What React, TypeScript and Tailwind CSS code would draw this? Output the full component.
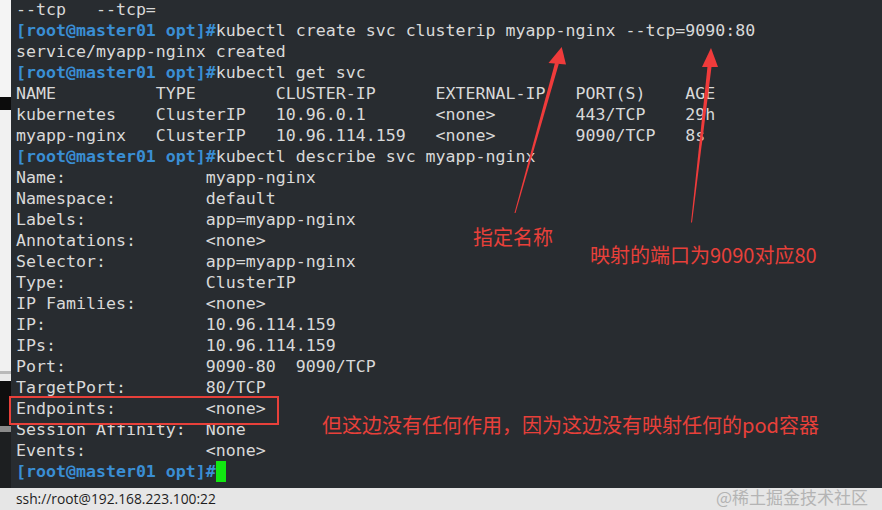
const prompt = "[root@master01 opt]#";

const lines: { p?: boolean; t: string }[] = [
  { t: "--tcp   --tcp=" },
  { p: true, t: "kubectl create svc clusterip myapp-nginx --tcp=9090:80" },
  { t: "service/myapp-nginx created" },
  { p: true, t: "kubectl get svc" },
  { t: "NAME          TYPE        CLUSTER-IP      EXTERNAL-IP   PORT(S)    AGE" },
  { t: "kubernetes    ClusterIP   10.96.0.1       <none>        443/TCP    29h" },
  { t: "myapp-nginx   ClusterIP   10.96.114.159   <none>        9090/TCP   8s" },
  { p: true, t: "kubectl describe svc myapp-nginx" },
  { t: "Name:              myapp-nginx" },
  { t: "Namespace:         default" },
  { t: "Labels:            app=myapp-nginx" },
  { t: "Annotations:       <none>" },
  { t: "Selector:          app=myapp-nginx" },
  { t: "Type:              ClusterIP" },
  { t: "IP Families:       <none>" },
  { t: "IP:                10.96.114.159" },
  { t: "IPs:               10.96.114.159" },
  { t: "Port:              9090-80  9090/TCP" },
  { t: "TargetPort:        80/TCP" },
  { t: "Endpoints:         <none>" },
  { t: "Session Affinity:  None" },
  { t: "Events:            <none>" },
];

const cjk = { fontFamily: '"Noto Sans CJK SC", "Noto Sans", sans-serif' };

export default function App() {
  return (
    <div className="relative w-[882px] h-[510px] overflow-hidden flex flex-col bg-[#282c30]">
      <div className="flex flex-1 min-h-0">
        {/* window behind, left edge */}
        <div className="w-[11px] flex flex-col">
          <div className="h-[97px] bg-[#f4f4f4]" />
          <div className="h-[13px] bg-[#0c0c0c]" />
          <div className="h-[261px] bg-[#f1f1f1]" />
          <div className="h-[3px] bg-[#b9b9b9]" />
          <div className="h-[7px] bg-[#e9e9e9]" />
          <div className="h-[45px] bg-[#0e0e0e]" />
          <div className="h-[6px] bg-[#8a8a8a]" />
          <div className="flex-1 bg-[#1d1f21]" />
        </div>

        <div
          className="flex-1 bg-[#282c30] pl-[5px] -mt-[1px] text-[16.6px] leading-[21px] text-[#d9d9d9] whitespace-pre"
          style={{ fontFamily: '"DejaVu Sans Mono", monospace' }}
        >
          {lines.map((l, i) => (
            <div key={i} className="h-[21px]">
              {l.p && <span className="font-bold text-[#3a8ed4]">{prompt}</span>}
              {l.t}
            </div>
          ))}
          <div className="h-[21px] flex items-stretch">
            <span className="font-bold text-[#3a8ed4]">{prompt}</span>
            <span className="w-[10px] bg-[#11e711]" />
          </div>
        </div>
      </div>

      <div className="h-[22px] bg-[#e6e6e6] flex items-center pl-[16px]">
        <span className="text-[13.8px] text-[#1e1e1e]" style={{ fontFamily: '"Open Sans", "Noto Sans", sans-serif' }}>
          ssh://root@192.168.223.100:22
        </span>
      </div>

      {/* annotations drawn over the terminal */}
      <div className="absolute left-[9px] top-[396px] w-[270px] h-[29px] border-2 border-[#e8403a]" />

      <svg className="absolute left-0 top-0" width="882" height="510" viewBox="0 0 882 510">
        <polygon points="514.5,212.9 515.5,213.1 558.9,63.5 555.1,62.5" fill="#ef3b3b" />
        <polygon points="561.7,47 548.5,63 566,64.5" fill="#ef3b3b" />
        <polygon points="691,222.4 692,222.6 711.5,67 707.5,66.5" fill="#ef3b3b" />
        <polygon points="711,48 702,67 718,67" fill="#ef3b3b" />
      </svg>

      <div className="absolute left-[473px] top-[227px] text-[20px] leading-[20px] text-[#e8403a]" style={cjk}>
        指定名称
      </div>
      <div className="absolute left-[590px] top-[245px] text-[20px] leading-[20px] text-[#e8403a]" style={cjk}>
        映射的端口为9090对应80
      </div>
      <div className="absolute left-[322px] top-[415px] text-[20px] leading-[20px] text-[#e8403a]" style={cjk}>
        但这边没有任何作用，因为这边没有映射任何的pod容器
      </div>
      <div className="absolute left-[716px] top-[488px] text-[17px] leading-[18px] text-[#b4b4b4]" style={cjk}>
        @稀土掘金技术社区
      </div>
    </div>
  );
}
